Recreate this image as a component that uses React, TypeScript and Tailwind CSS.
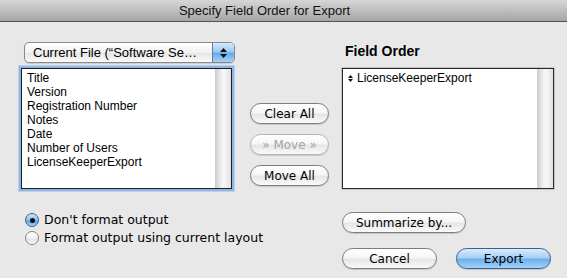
import React from "react";

const fields = [
  "Title",
  "Version",
  "Registration Number",
  "Notes",
  "Date",
  "Number of Users",
  "LicenseKeeperExport",
];

// Plain aqua push button
function AquaButton({
  label,
  width,
  disabled = false,
  primary = false,
}: {
  label: string;
  width: string;
  disabled?: boolean;
  primary?: boolean;
}) {
  const base =
    "h-[21px] rounded-full border flex items-center justify-center font-['DejaVu_Sans',sans-serif] text-[12px] leading-none shadow-[0_1px_1px_rgba(0,0,0,0.15)]";
  if (primary) {
    return (
      <div
        className={`${base} ${width} border-[#3d5f92] text-black bg-[linear-gradient(to_bottom,#d9ecfc_0%,#a7d0f5_45%,#70b0ee_55%,#9fd2fb_100%)]`}
      >
        {label}
      </div>
    );
  }
  return (
    <div
      className={`${base} ${width} ${
        disabled ? "border-[#b4b4b4] text-[#a3a3a3]" : "border-[#7d7d7d] text-black"
      } bg-[linear-gradient(to_bottom,#ffffff_0%,#f6f6f6_45%,#e6e6e6_55%,#fafafa_100%)]`}
    >
      {label}
    </div>
  );
}

function Radio({ checked }: { checked: boolean }) {
  if (checked) {
    return (
      <div className="w-[14px] h-[14px] rounded-full border border-[#41638f] bg-[linear-gradient(to_bottom,#cfe5fa_0%,#8ec0ef_50%,#5fa4e8_60%,#a6d2f8_100%)] flex items-center justify-center">
        <div className="w-[5px] h-[5px] rounded-full bg-[#111]" />
      </div>
    );
  }
  return (
    <div className="w-[14px] h-[14px] rounded-full border border-[#858585] bg-[linear-gradient(to_bottom,#ffffff_0%,#f2f2f2_50%,#e2e2e2_60%,#fbfbfb_100%)]" />
  );
}

function ScrollTrack() {
  return (
    <div className="w-[16px] h-full bg-[linear-gradient(to_right,#c9c9c9_0%,#e8e8e8_30%,#f8f8f8_55%,#e0e0e0_100%)]" />
  );
}

export default function App() {
  return (
    <div className="w-[567px] h-[278px] bg-[#e8e8e8] font-['Liberation_Sans',Arial,sans-serif] text-black overflow-hidden">
      {/* Title bar */}
      <div className="h-[22px] border-b border-[#525252] bg-[linear-gradient(to_bottom,#d6d6d6,#a6a6a6)] flex items-center justify-center pr-[38px] text-[13px] text-[#111]">
        Specify Field Order for Export
      </div>

      {/* Top row: source, move buttons, field order */}
      <div className="flex pl-[21px] pt-[20px]">
        <div className="w-[214px]">
          <div className="ml-[3px] w-[211px] h-[21px] rounded-[5px] border border-[#8a8a8a] bg-[linear-gradient(to_bottom,#ffffff,#f1f1f1_50%,#e6e6e6_55%,#fbfbfb)] flex overflow-hidden shadow-[0_1px_1px_rgba(0,0,0,0.12)]">
            <div className="flex-1 pl-[8px] text-[13px] leading-[19px] whitespace-nowrap">
              Current File (“Software Se…
            </div>
            <div className="w-[22px] border-l border-[#5b7fb0] bg-[linear-gradient(to_bottom,#d4e9fc_0%,#9bcaf3_45%,#68aaea_55%,#a3d3fa_100%)] flex flex-col items-center justify-center gap-[2px]">
              <svg width="7" height="4" viewBox="0 0 7 4">
                <path d="M3.5 0 L7 4 L0 4 Z" fill="#111" />
              </svg>
              <svg width="7" height="4" viewBox="0 0 7 4">
                <path d="M0 0 L7 0 L3.5 4 Z" fill="#111" />
              </svg>
            </div>
          </div>
          <div className="mt-[5px] w-[211px] h-[121px] border border-[#1e1e1e] bg-white flex shadow-[0_0_0_2px_#8fb6e3,0_0_0_3px_#b9d2ee]">
            <div className="flex-1 pl-[5px] pt-[2px] text-[12px] leading-[14px]">
              {fields.map((f) => (
                <div key={f}>{f}</div>
              ))}
            </div>
            <ScrollTrack />
          </div>
        </div>

        <div className="ml-[15px] w-[79px] pt-[61px] flex flex-col gap-[10px]">
          <AquaButton label="Clear All" width="w-[79px]" />
          <AquaButton label="» Move »" width="w-[79px]" disabled />
          <AquaButton label="Move All" width="w-[79px]" />
        </div>

        <div className="ml-[13px] w-[212px]">
          <div className="pl-[3px] pt-[1px] h-[26px] text-[14px] font-bold leading-[16px]">
            Field Order
          </div>
          <div className="w-[212px] h-[121px] border border-[#2a2a2a] bg-white flex shadow-[0_0_0_1px_#c4c4c4]">
            <div className="flex-1 pl-[5px] pt-[2px] text-[12px] leading-[14px] flex items-center gap-[4px] self-start">
              <svg width="5" height="7" viewBox="0 0 5 7" className="mt-[1px]">
                <path d="M2.5 0 L5 3 L0 3 Z M0 4 L5 4 L2.5 7 Z" fill="#111" />
              </svg>
              <span>LicenseKeeperExport</span>
            </div>
            <ScrollTrack />
          </div>
        </div>
      </div>

      {/* Bottom row: format options and action buttons */}
      <div className="flex mt-[23px]">
        <div className="pl-[25px] pt-[1px] flex flex-col font-['DejaVu_Sans',sans-serif] text-[12.5px]">
          <div className="flex items-center gap-[5px] h-[14px]">
            <Radio checked />
            <span>Don't format output</span>
          </div>
          <div className="flex items-center gap-[5px] h-[14px] mt-[4px]">
            <Radio checked={false} />
            <span>Format output using current layout</span>
          </div>
        </div>
        <div className="ml-auto mr-[16px] w-[209px] flex flex-col">
          <AquaButton label="Summarize by..." width="w-[124px]" />
          <div className="flex justify-between mt-[15px]">
            <AquaButton label="Cancel" width="w-[95px]" />
            <AquaButton label="Export" width="w-[95px]" primary />
          </div>
        </div>
      </div>
    </div>
  );
}
